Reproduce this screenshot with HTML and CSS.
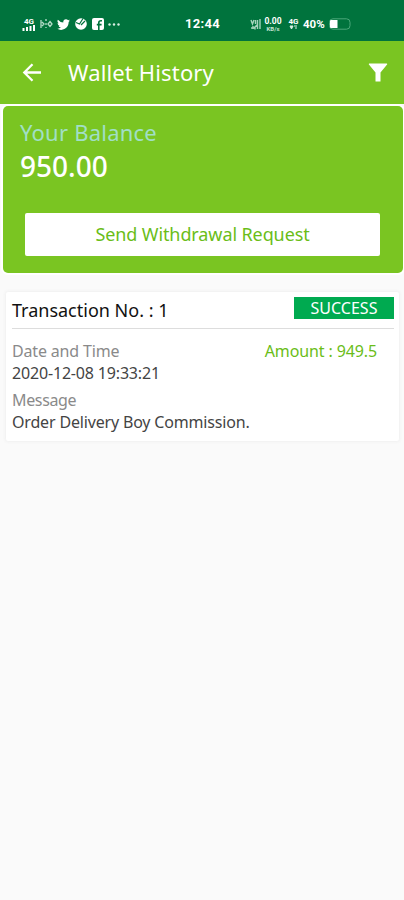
FILE: index.html
```
<!DOCTYPE html>
<html lang="en">
<head>
<meta charset="utf-8">
<title>Wallet History</title>
<link rel="stylesheet" href="styles.css">
</head>
<body>
<div class="status">
  <div class="status-left">
    <div class="stack net"><span>4G</span>
      <svg width="14" height="6" viewBox="0 0 14 6"><path d="M1.500 6V3M5 6V2M8.500 6V1M12 6V0" stroke="#fff" stroke-width="2"/></svg>
    </div>
    <svg class="hotspot" width="13" height="12" viewBox="0 0 13 12" fill="none" stroke="#b4dcc8" stroke-width="1.300"><path d="M1 2v8M2 4l2 2-2 2M6 1v2M6 5v2M6 9v1"/><path d="M10 3.500l2 2.500-2 2.500L8 6z"/></svg>
    <svg class="bird" width="13" height="13" viewBox="0 0 24 24" fill="#fff"><path d="M23.950 4.600a10 10 0 0 1-2.800.8 4.900 4.900 0 0 0 2.100-2.700 10 10 0 0 1-3.100 1.200 4.900 4.900 0 0 0-8.400 4.500A14 14 0 0 1 1.700 3.200a4.900 4.900 0 0 0 1.500 6.600 4.900 4.900 0 0 1-2.200-.6 4.900 4.900 0 0 0 3.900 4.900 5 5 0 0 1-2.200.1 4.900 4.900 0 0 0 4.600 3.400A10 10 0 0 1 0 19.600a14 14 0 0 0 21.500-12.400 10 10 0 0 0 2.450-2.600z"/></svg>
    <svg class="ball" width="12" height="12" viewBox="0 0 12 12"><circle cx="6" cy="6" r="5.800" fill="#fff"/><path d="M1 4.500L4.500 6 8 0.500M6 7l4-4" fill="none" stroke="#00733d" stroke-width="1.200"/></svg>
    <svg class="fb" width="12" height="12" viewBox="0 0 12 12"><rect width="12" height="12" rx="2" fill="#fff"/><path d="M6.800 12V4.800q0-2 2.200-2h1M4.800 6.600h4.800" fill="none" stroke="#00733d" stroke-width="1.600"/></svg>
    <svg width="12" height="3" viewBox="0 0 12 3" fill="#d8efe3"><circle cx="1.500" cy="1.500" r="1.200"/><circle cx="6" cy="1.500" r="1.200"/><circle cx="10.500" cy="1.500" r="1.200"/></svg>
  </div>
  <div class="clock">12:44</div>
  <div class="status-right">
    <svg class="volte" width="11" height="11" viewBox="0 0 11 11" fill="none" stroke="#a5d3bc" stroke-width="1.400"><path d="M1 1l1.500 4L4 1M5.500 1v4M7.500 1v9M10 0v10M1 9h3l3-3M3 7v3M5 8v2.500"/></svg>
    <div class="stack speed"><span>0.00</span><small>KB/s</small></div>
    <div class="stack lte"><span>4G</span>
      <svg width="9" height="5" viewBox="0 0 9 5"><path d="M1 1h3L2.500 4zM5 1h3M6 3h2" fill="#d8efe3" stroke="#d8efe3"/></svg>
    </div>
    <div class="percent">40%</div>
    <svg width="22" height="12" viewBox="0 0 22 12"><rect x=".5" y=".8" width="20.500" height="10.400" rx="3.500" fill="none" stroke="#4aa77a"/><path d="M2 2h6.500v8H2a1 1 0 0 1-1-1V3A1 1 0 0 1 2 2z" fill="#fff"/></svg>
  </div>
</div>
<header class="appbar">
  <svg class="back" width="20" height="20" viewBox="0 0 20 20" fill="none" stroke="#fff" stroke-width="2.300"><path d="M19 9.500H3M10.500 1.300L2.300 9.500l8.200 8.200"/></svg>
  <h1>Wallet History</h1>
  <svg class="filter" width="20" height="20" viewBox="0 0 20 20" fill="#fff"><path d="M1.200.5h17.600q.8.300.3 1L12.500 9.500V18.500h-5V9.500L.9 1.500q-.4-.7.300-1z"/></svg>
</header>
<main>
  <section class="balance">
    <div class="label">Your Balance</div>
    <div class="value">950.00</div>
    <button class="withdraw"><span>Send Withdrawal Request</span></button>
  </section>
  <section class="card">
    <div class="card-head">
      <h2>Transaction No. : 1</h2>
      <span class="badge">SUCCESS</span>
    </div>
    <div class="row">
      <div class="key">Date and Time</div>
      <div class="amount">Amount : 949.5</div>
    </div>
    <div class="val">2020-12-08 19:33:21</div>
    <div class="key message">Message</div>
    <div class="val">Order Delivery Boy Commission.</div>
  </section>
</main>
</body>
</html>
```
FILE: styles.css
```
* { box-sizing: border-box; }
body {
  margin: 0;
  min-height: 900px;
  background: #fafafa;
  font-family: "Noto Sans", "Open Sans", sans-serif;
}
svg { display: block; flex: none; }
.status {
  height: 41px;
  padding: 7px 0 0 22px;
  display: grid;
  grid-template-columns: 163px 65px 1fr;
  align-items: center;
  background: #00733d;
  color: #fff;
  font-family: Roboto, sans-serif;
}
.status-left, .status-right { display: flex; align-items: center; }
.stack {
  display: flex;
  flex-direction: column;
  align-items: center;
  font-size: 8px;
  line-height: 7px;
  font-weight: 700;
}
.net { width: 14px; }
.hotspot { margin-left: 4px; }
.bird { margin-left: 4px; }
.ball { margin-left: 5px; }
.fb { margin: 0 4px 0 5px; }
.clock { font-size: 13px; line-height: 16px; font-weight: 700; letter-spacing: .3px; }
.volte { margin-right: 3px; }
.speed { width: 18px; font-size: 8.500px; margin-right: 7px; line-height: 8px; }
.speed small { margin-top: 1px; font-size: 6px; line-height: 6px; color: #c4e3d3; }
.lte { width: 9px; margin-right: 5px; }
.percent { width: 26px; font-size: 11.500px; line-height: 14px; font-weight: 700; }
.appbar {
  height: 63px;
  padding: 0 16px 0 22px;
  display: flex;
  align-items: center;
  background: #7ac522;
  color: #fff;
}
.appbar h1 {
  flex: 1;
  margin: -1px 0 0 26px;
  font-size: 22px;
  line-height: 30px;
  font-weight: 400;
  letter-spacing: .15px;
  white-space: nowrap;
}
.balance {
  margin: 2px 1px 0 3px;
  height: 167px;
  padding: 11px 22px 0 17px;
  border-radius: 5px;
  background: #7ac522;
  box-shadow: 0 0 0 2px #fff;
}
.label { font-size: 22px; line-height: 30px; letter-spacing: .22px; color: #a1dfc6; }
.value { margin-top: 2px; font-size: 28px; line-height: 34px; font-weight: 500; color: #fff; }
.withdraw {
  display: block;
  width: 355px;
  height: 43px;
  margin: 30px 0 0 5px;
  padding: 0;
  border: 0;
  border-radius: 2px;
  background: #fff;
  color: #6abd18;
  font: 400 18px/43px "Noto Sans", sans-serif;
  letter-spacing: -.1px;
}
.card {
  height: 149px;
  margin: 19px 5px 0 6px;
  padding: 0 0 0 6px;
  border-radius: 2px;
  background: #fff;
  box-shadow: 0 0 3px 1px #f0f0f0;
}
.card-head {
  display: flex;
  justify-content: space-between;
  height: 37px;
  margin-right: 5px;
  padding-top: 5px;
  border-bottom: 1px solid #ddd;
}
.card h2 { margin: 0; font-size: 18px; line-height: 26px; font-weight: 400; color: #111; }
.badge {
  width: 100px;
  height: 22px;
  background: #00aa50;
  color: #fff;
  font-size: 16px;
  line-height: 22px;
  text-align: center;
}
.row { display: flex; justify-content: space-between; margin: 12px 22px 0 0; }
.key, .amount, .val { font-size: 16px; line-height: 21px; letter-spacing: -.17px; }
.key { color: #8a8a8a; }
.amount { color: #6abd18; letter-spacing: -.12px; }
.val { color: #444; }
.row + .val { margin-top: 1px; }
.message { margin-top: 6px; letter-spacing: -.35px; }
.message + .val { margin-top: 1px; }
```
